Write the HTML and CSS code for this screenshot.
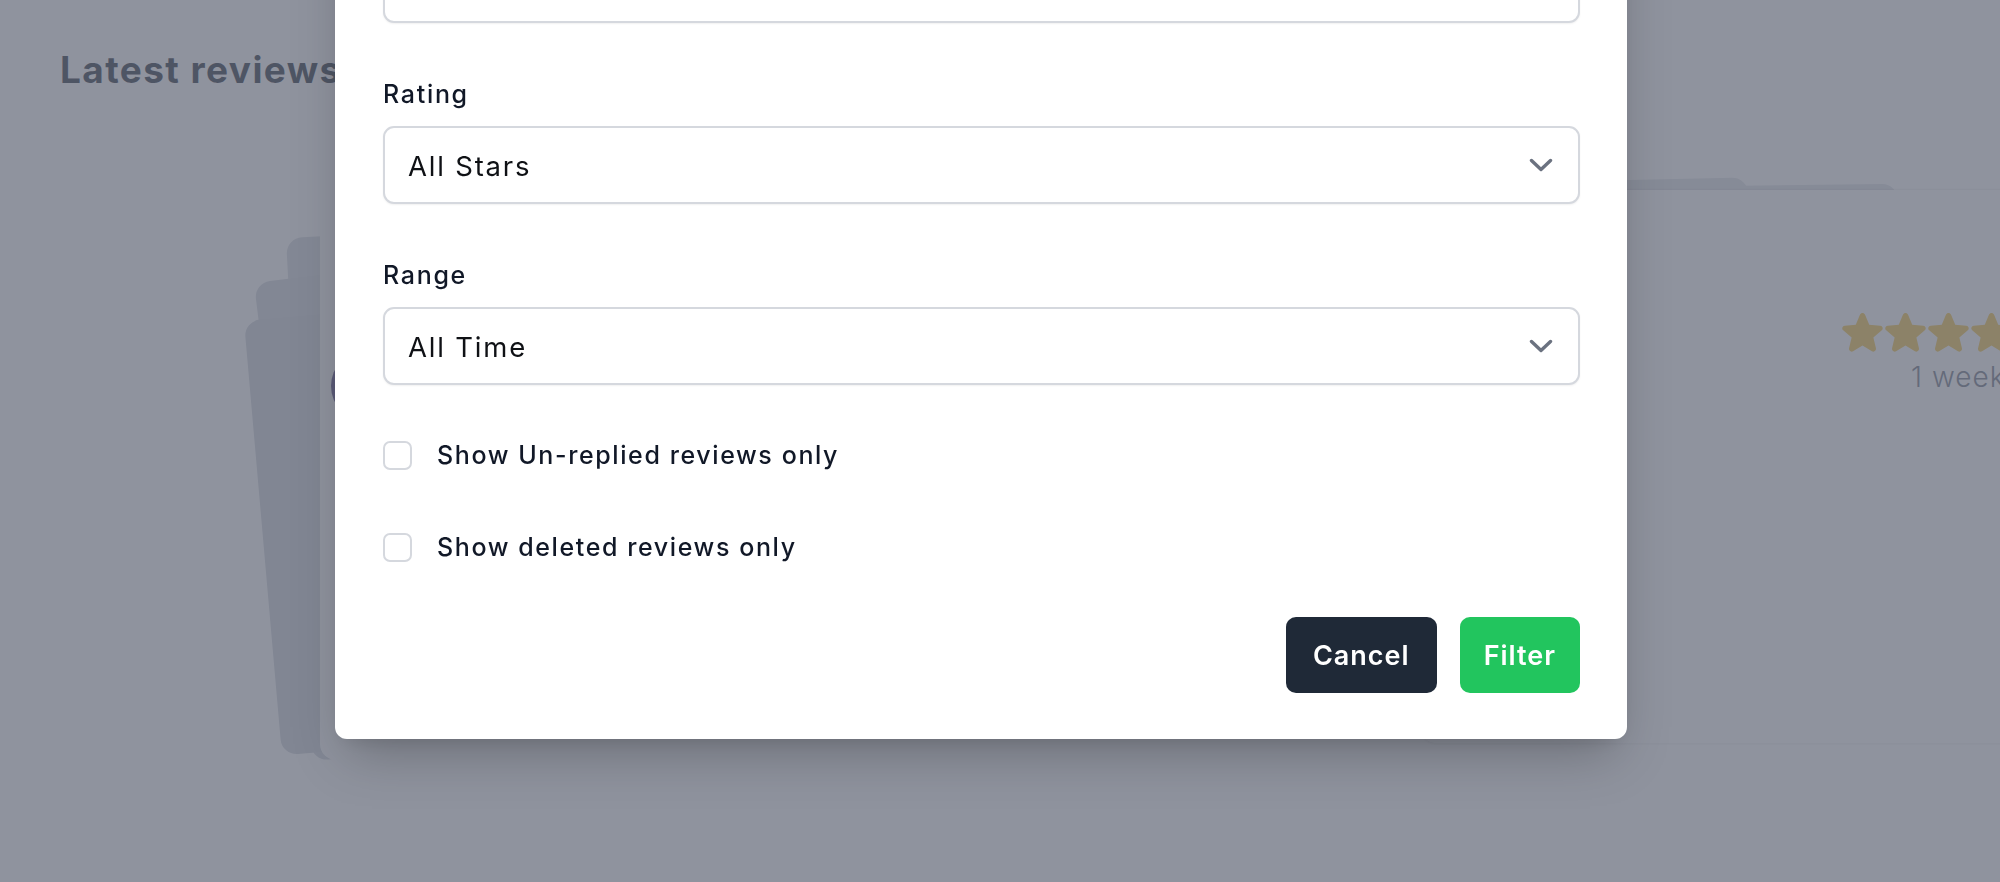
FILE: index.html
```html
<!DOCTYPE html>
<html lang="en">
<head>
<meta charset="utf-8">
<title>Latest reviews – Filter</title>
<link rel="stylesheet" href="styles.css">
</head>
<body>
  <main class="page">
    <h2 class="page-title">Latest reviews</h2>
    <section class="carousel" aria-hidden="true">
      <div class="card card-left card-left-back"></div>
      <div class="card card-left card-left-mid"></div>
      <div class="card card-left card-left-front"></div>
      <div class="card card-right-back card-rb-1"></div>
      <div class="card card-right-back card-rb-2"></div>
      <div class="card card-center">
        <span class="avatar"></span>
      </div>
      <div class="card card-right">
        <div class="stars">
          <svg viewBox="0 0 24 24"><path d="M10.788 3.21c.448-1.077 1.976-1.077 2.424 0l2.082 5.007 5.404.433c1.164.093 1.636 1.545.749 2.305l-4.117 3.527 1.257 5.273c.271 1.136-.964 2.033-1.96 1.425L12 18.354 7.373 21.18c-.996.608-2.231-.29-1.96-1.425l1.257-5.273-4.117-3.527c-.887-.76-.415-2.212.749-2.305l5.404-.433 2.082-5.006z"/></svg>
          <svg viewBox="0 0 24 24"><path d="M10.788 3.21c.448-1.077 1.976-1.077 2.424 0l2.082 5.007 5.404.433c1.164.093 1.636 1.545.749 2.305l-4.117 3.527 1.257 5.273c.271 1.136-.964 2.033-1.96 1.425L12 18.354 7.373 21.18c-.996.608-2.231-.29-1.96-1.425l1.257-5.273-4.117-3.527c-.887-.76-.415-2.212.749-2.305l5.404-.433 2.082-5.006z"/></svg>
          <svg viewBox="0 0 24 24"><path d="M10.788 3.21c.448-1.077 1.976-1.077 2.424 0l2.082 5.007 5.404.433c1.164.093 1.636 1.545.749 2.305l-4.117 3.527 1.257 5.273c.271 1.136-.964 2.033-1.96 1.425L12 18.354 7.373 21.18c-.996.608-2.231-.29-1.96-1.425l1.257-5.273-4.117-3.527c-.887-.76-.415-2.212.749-2.305l5.404-.433 2.082-5.006z"/></svg>
          <svg viewBox="0 0 24 24"><path d="M10.788 3.21c.448-1.077 1.976-1.077 2.424 0l2.082 5.007 5.404.433c1.164.093 1.636 1.545.749 2.305l-4.117 3.527 1.257 5.273c.271 1.136-.964 2.033-1.96 1.425L12 18.354 7.373 21.18c-.996.608-2.231-.29-1.96-1.425l1.257-5.273-4.117-3.527c-.887-.76-.415-2.212.749-2.305l5.404-.433 2.082-5.006z"/></svg>
          <svg viewBox="0 0 24 24"><path d="M10.788 3.21c.448-1.077 1.976-1.077 2.424 0l2.082 5.007 5.404.433c1.164.093 1.636 1.545.749 2.305l-4.117 3.527 1.257 5.273c.271 1.136-.964 2.033-1.96 1.425L12 18.354 7.373 21.18c-.996.608-2.231-.29-1.96-1.425l1.257-5.273-4.117-3.527c-.887-.76-.415-2.212.749-2.305l5.404-.433 2.082-5.006z"/></svg>
        </div>
        <div class="review-time">1 week</div>
      </div>
    </section>
  </main>

  <div class="overlay"></div>

  <div class="modal" role="dialog" aria-label="Filter reviews">
    <form class="form">
      <div class="fields">
        <div class="field">
          <div class="select select-empty"></div>
        </div>
        <div class="field">
          <label class="field-label">Rating</label>
          <div class="select"><span>All Stars</span>
            <svg class="chevron" viewBox="0 0 24 14"><path d="M2.5 2.5 L12 11.5 L21.5 2.5"/></svg>
          </div>
        </div>
        <div class="field">
          <label class="field-label">Range</label>
          <div class="select"><span>All Time</span>
            <svg class="chevron" viewBox="0 0 24 14"><path d="M2.5 2.5 L12 11.5 L21.5 2.5"/></svg>
          </div>
        </div>
      </div>
      <label class="check-row"><span class="checkbox"></span><span class="check-label">Show Un-replied reviews only</span></label>
      <label class="check-row"><span class="checkbox"></span><span class="check-label">Show deleted reviews only</span></label>
      <div class="actions">
        <button type="button" class="btn btn-cancel">Cancel</button>
        <button type="button" class="btn btn-filter">Filter</button>
      </div>
    </form>
  </div>
</body>
</html>
```
FILE: styles.css
```css
* { box-sizing: border-box; }

html, body {
  margin: 0;
  height: 100%;
  overflow: hidden;
}

body {
  font-family: Inter, "Noto Sans", "Liberation Sans", sans-serif;
  background: #ffffff;
  color: #111827;
}

.page {
  position: relative;
  height: 882px;
  padding: 46px 60px 0;
}

.page-title {
  margin: 0;
  font-size: 37px;
  line-height: 48px;
  font-weight: 700;
  color: #1f2937;
  letter-spacing: 1.4px;
}

/* decorative review carousel behind the dialog */
.carousel {
  position: absolute;
  inset: 0;
}

.card {
  position: absolute;
  border-radius: 16px;
  transform-origin: 0 0;
}

.card-left {
  width: 420px;
  height: 440px;
  background: #cfd3da;
}
.card-left-back  { left: 286px; top: 238px; height: 480px; transform: rotate(-3deg); background: #d6d9df; }
.card-left-mid   { left: 254px; top: 283px; height: 482px; transform: rotate(-7deg); background: #d2d5dc; }
.card-left-front { left: 244px; top: 321px; height: 436px; transform: rotate(-5deg); background: #cdd1d8; }

.card-right-back {
  width: 500px;
  height: 500px;
  background: #e0e2e7;
}
.card-rb-1 { left: 1248px; top: 188px; transform: rotate(-1.2deg); }
.card-rb-2 { left: 1398px; top: 190px; transform: rotate(-0.7deg); }

.card-center {
  left: 320px;
  top: 200px;
  width: 1300px;
  height: 560px;
  background: #ffffff;
}

.avatar {
  position: absolute;
  left: 11px;
  top: 150px;
  width: 72px;
  height: 72px;
  border-radius: 50%;
  background: #4b3d7c;
}

.card-right {
  left: 1420px;
  top: 190px;
  width: 700px;
  height: 553px;
  background: #ffffff;
  box-shadow: 0 -1px 2px rgba(0,0,0,0.06), 0 1px 3px rgba(0,0,0,0.08);
  padding: 118px 0 0 418px;
}

.stars {
  display: flex;
}
.stars svg {
  flex: none;
  width: 49px;
  height: 49px;
  margin-right: -6px;
  fill: #f5c542;
}
.review-time {
  margin: 2px 0 0 73px;
  font-size: 28px;
  line-height: 36px;
  font-weight: 300;
  letter-spacing: 1px;
  color: #6b7280;
  white-space: nowrap;
}

.overlay {
  position: fixed;
  inset: 0;
  background: rgba(98, 104, 119, 0.714);
}

/* dialog */
.modal {
  position: fixed;
  left: 335px;
  bottom: 143px;
  width: 1292px;
  background: #ffffff;
  border-radius: 12px;
  padding: 48px 47px 46px 48px;
  box-shadow: 0 25px 50px -12px rgba(0, 0, 0, 0.25), 0 10px 20px -10px rgba(0,0,0,0.12);
}

.form {
  display: flex;
  flex-direction: column;
  gap: 48px;
}

.fields {
  display: flex;
  flex-direction: column;
  gap: 53px;
}

.field {
  display: flex;
  flex-direction: column;
  gap: 14px;
}

.field-label {
  font-size: 25px;
  line-height: 36px;
  font-weight: 500;
  letter-spacing: 1.7px;
  color: #111827;
}

.select {
  height: 78px;
  display: flex;
  align-items: center;
  justify-content: space-between;
  padding: 1px 25px 0 23px;
  border: 2px solid #d5d8de;
  border-radius: 11px;
  background: #ffffff;
  box-shadow: 0 1px 2px rgba(0, 0, 0, 0.06);
  font-size: 27.5px;
  font-weight: 400;
  letter-spacing: 1.8px;
  color: #0f1115;
}

.chevron {
  flex: none;
  width: 24px;
  height: 14px;
  margin-top: -1px;
  fill: none;
  stroke: #6b7280;
  stroke-width: 3.4;
  stroke-linecap: round;
  stroke-linejoin: round;
}

.check-row {
  display: flex;
  align-items: center;
  gap: 25px;
  height: 44px;
}

.checkbox {
  flex: none;
  width: 29px;
  height: 29px;
  border: 2px solid #d5d8de;
  border-radius: 7px;
  background: #ffffff;
}

.check-label {
  font-size: 25px;
  line-height: 36px;
  font-weight: 500;
  letter-spacing: 1.6px;
  color: #111827;
}

.actions {
  display: flex;
  justify-content: flex-end;
  gap: 23px;
}

.btn {
  height: 76px;
  border: none;
  border-radius: 10px;
  padding: 0 27px;
  font-family: inherit;
  font-size: 27px;
  font-weight: 600;
  letter-spacing: 1px;
  color: #ffffff;
}

.btn-cancel { background: #1f2937; }
.btn-filter { background: #22c55e; padding: 0 24px; }
```
